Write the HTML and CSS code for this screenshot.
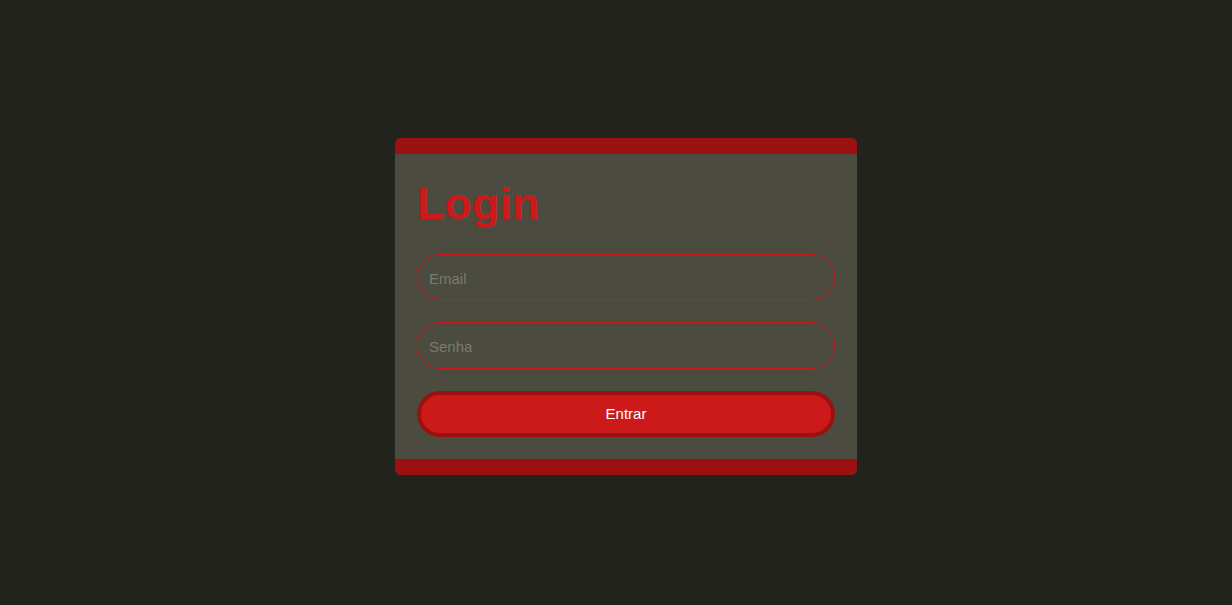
FILE: index.html
```html
<!DOCTYPE html>
<html lang="pt">
<head>
<meta charset="utf-8">
<title>Login</title>
<link rel="stylesheet" href="styles.css">
</head>
<body>
<main class="page">
  <form class="card">
    <div class="bar"></div>
    <div class="body">
      <h1 class="title">Login</h1>
      <input class="field" type="email" placeholder="Email">
      <input class="field field-second" type="password" placeholder="Senha">
      <button class="btn" type="button">Entrar</button>
    </div>
    <div class="bar"></div>
  </form>
</main>
</body>
</html>
```

FILE: styles.css
```css
html, body {
  margin: 0;
  padding: 0;
  height: 100%;
  background: #23231e;
  font-family: "Liberation Sans", Arial, sans-serif;
}
.page {
  height: 100%;
  display: flex;
  justify-content: center;
  align-items: flex-start;
  padding-top: 138px;
  padding-left: 20px;
  box-sizing: border-box;
}
.card {
  width: 462px;
  background: #4b4b3f;
  border-radius: 6px;
  overflow: hidden;
  display: flex;
  flex-direction: column;
}
.bar {
  height: 16px;
  background: #9b1111;
}
.body {
  padding: 22px;
  display: flex;
  flex-direction: column;
  gap: 22px;
}
.title {
  margin: 5px 0 5px;
  font-size: 45px;
  line-height: 46px;
  font-weight: bold;
  color: #cc1a1a;
}
.field {
  height: 46px;
  box-sizing: border-box;
  border: 1px solid #cc1a1a;
  border-radius: 23px;
  background: transparent;
  padding: 2px 11px 0;
  font-family: "Liberation Sans", Arial, sans-serif;
  font-size: 15px;
  color: #ddd;
  outline: none;
}
.field-second {
  height: 47px;
}
.field::placeholder {
  color: #7a7a70;
}
.btn {
  height: 46px;
  box-sizing: border-box;
  border: 4px solid #9b1111;
  border-radius: 23px;
  background: #cc1a1a;
  color: #ffffff;
  padding: 0 0 2px;
  font-family: "Liberation Sans", Arial, sans-serif;
  font-size: 15px;
  cursor: pointer;
}
```
